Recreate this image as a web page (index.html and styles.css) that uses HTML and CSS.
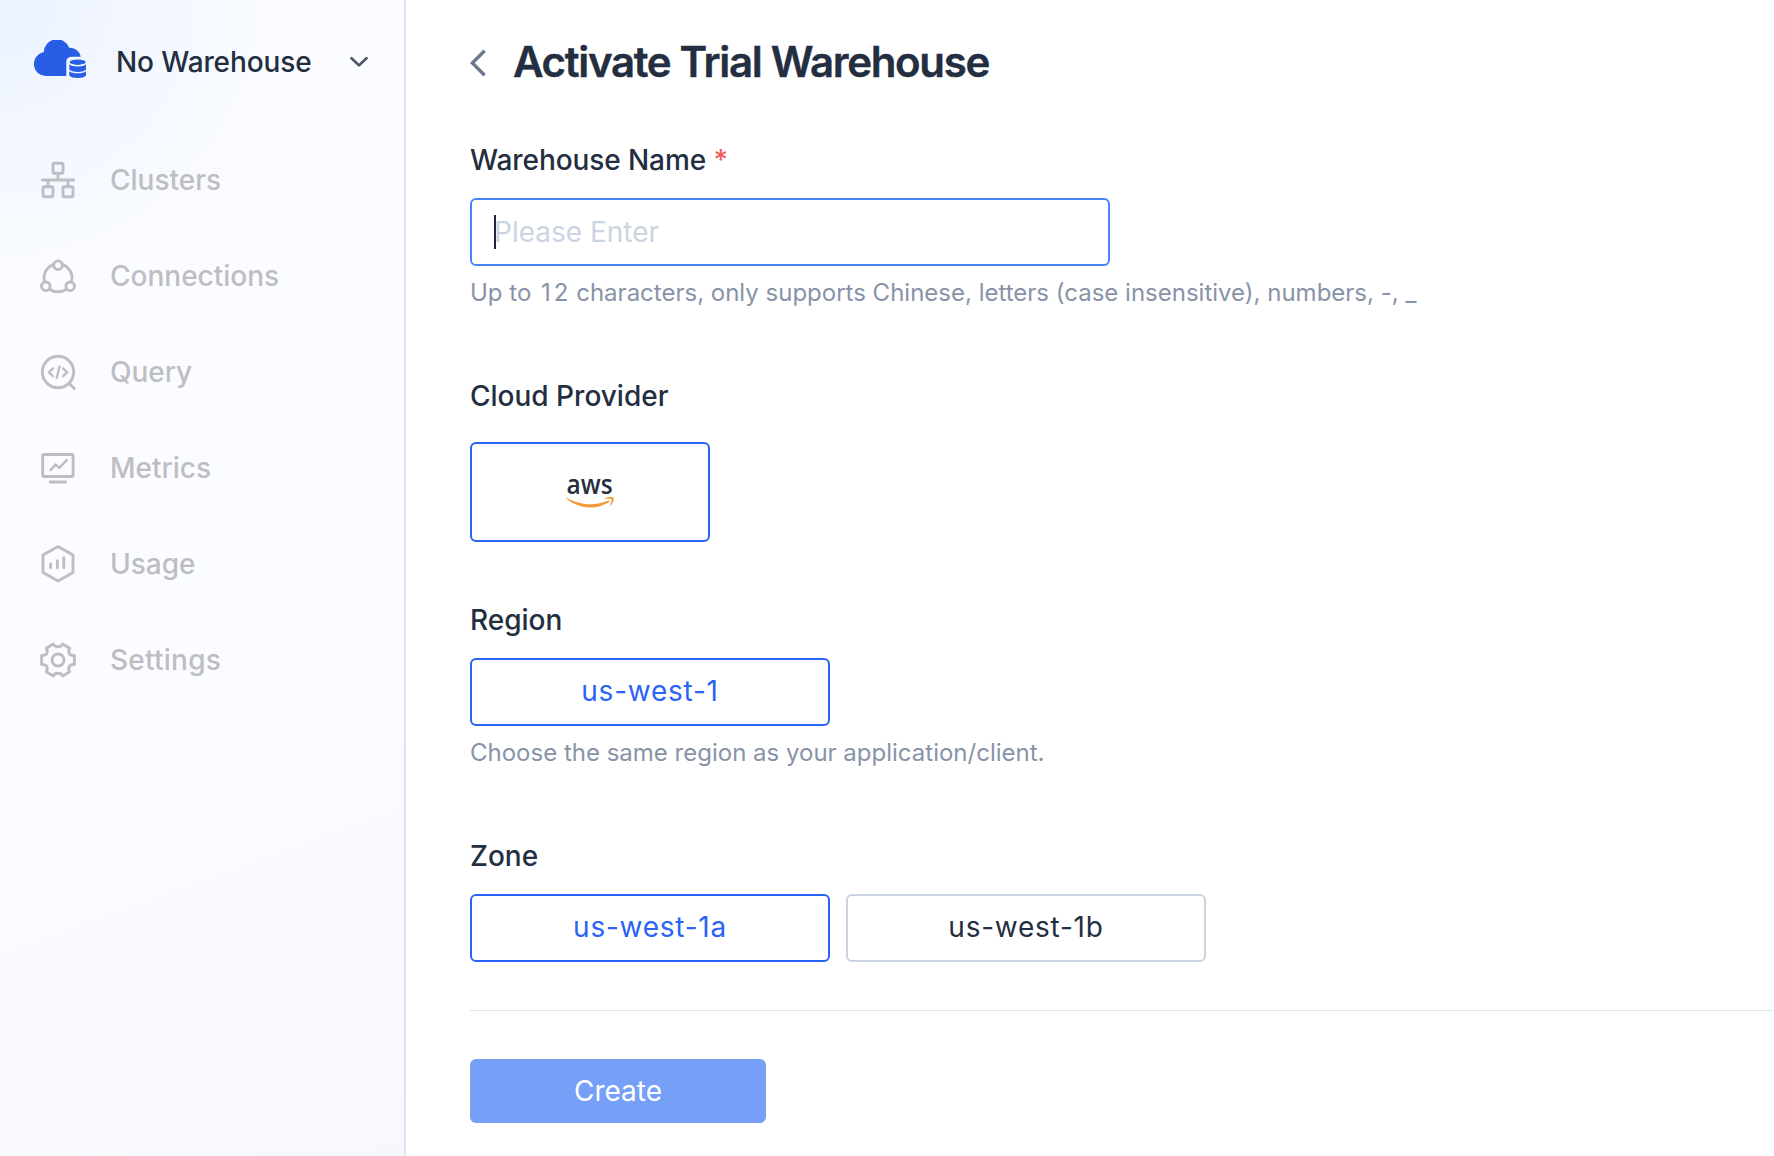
FILE: index.html
```
<!DOCTYPE html>
<html lang="en">
<head>
<meta charset="utf-8">
<title>Activate Trial Warehouse</title>
<link rel="stylesheet" href="styles.css">
</head>
<body>
<div class="app">
  <aside class="sidebar">
    <div class="switcher">
      <svg class="logo" viewBox="0 0 52 38" width="52" height="38" fill="#285ee6">
        <path d="M12 36A12 12 0 0 1 9.7 12.2A13.2 13.2 0 0 1 35.2 7.7A11.5 11.5 0 0 1 46.8 16.7H38.5Q32.3 16.7 32.3 21.5V36Z"/>
        <ellipse cx="43.7" cy="22.2" rx="8" ry="2.7"/>
        <path d="M35.3 24.2Q37.5 26.4 43.7 26.4Q49.8 26.4 52 24.2V29.5Q50 31.9 43.7 31.9Q37.3 31.9 35.3 29.5Z"/>
        <path d="M35.3 31.2Q38 33.2 43.7 33.2Q49.3 33.2 52 31.2V35.5Q50 38 43.7 38Q37.3 38 35.3 35.5Z"/>
      </svg>
      <span class="switcher-name">No Warehouse</span>
      <svg class="chevron" viewBox="0 0 20 12" width="20" height="12" fill="none" stroke="#4c566a" stroke-width="2.7" stroke-linecap="round" stroke-linejoin="round"><path d="M2.5 2.2L10 9.4L17.5 2.2"/></svg>
    </div>
    <nav class="nav">
      <a class="nav-item"><svg class="nav-icon" viewBox="0 0 36 40"><rect x="13" y="3.3" width="10" height="10" rx="1.2"/><path d="M18 13.5V20M2.2 20H33.8M8 20V26.5M28 20V26.5"/><rect x="3" y="26.7" width="10" height="10" rx="1.2"/><rect x="23" y="26.7" width="10" height="10" rx="1.2"/></svg>Clusters</a>
      <a class="nav-item"><svg class="nav-icon" viewBox="0 0 36 40"><circle cx="18" cy="21.8" r="14"/><circle class="node" cx="18" cy="9.2" r="4.3"/><circle class="node" cx="5.8" cy="30.3" r="4.3"/><circle class="node" cx="30.2" cy="30.3" r="4.3"/></svg>Connections</a>
      <a class="nav-item"><svg class="nav-icon" viewBox="0 0 36 40"><circle cx="18" cy="20" r="15.7"/><path d="M29.3 31.3L34.3 36.4"/><path class="thin" d="M13 16.4L8.8 20.3L13 24.2M19.6 14.6L16.7 25.8M23 16.4L27.2 20.3L23 24.2"/></svg>Query</a>
      <a class="nav-item"><svg class="nav-icon" viewBox="0 0 36 40"><rect x="2.7" y="6.5" width="30.4" height="22" rx="1.6"/><path d="M10.3 34H25.7"/><path class="thin" d="M10.5 22.2L15.5 16.6L19.3 19.8L26.8 12.2"/></svg>Metrics</a>
      <a class="nav-item"><svg class="nav-icon" viewBox="0 0 36 40"><path d="M18 2.6L33 11V28.6L18 37L3 28.6V11Z"/><path d="M10.6 20V23.8M17.4 17V23.8M23.8 13.8V23.8"/></svg>Usage</a>
      <a class="nav-item nav-item-settings"><svg class="nav-icon" viewBox="0 0 36 40"><path transform="translate(18 20)" d="M16.4-4.5Q12.5-4.2 11.3-6.5T11.7-11.7L4.7-15.9Q3.2-13.2 0-13.2T-4.7-15.9L-11.7-11.7Q-10-8.8-11.3-6.5T-16.4-4.5V4.5Q-12.5 4.2-11.3 6.5T-11.7 11.7L-4.7 15.9Q-3.2 13.2 0 13.2T4.7 15.9L11.7 11.7Q10 8.8 11.3 6.5T16.4 4.5Z"/><circle cx="18" cy="20" r="6"/></svg>Settings</a>
    </nav>
  </aside>
  <main class="main">
    <header class="page-head">
      <svg class="back" viewBox="0 0 16 28" width="16" height="28" fill="none" stroke="#6c788e" stroke-width="3.4"><path d="M14.6 1.8L2.4 14L14.6 26.2"/></svg>
      <h1 class="title">Activate Trial Warehouse</h1>
    </header>
    <section class="field field-name">
      <div class="label">Warehouse Name <span class="required">*</span></div>
      <div class="input"><span class="caret"></span><span class="placeholder">Please Enter</span></div>
      <div class="hint">Up to <span class="limit">12</span> characters, only supports Chinese, letters (case insensitive), numbers, -, _</div>
    </section>
    <section class="field field-provider">
      <div class="label">Cloud Provider</div>
      <div class="provider">
        <svg class="aws" viewBox="0 0 48 30" width="48" height="30"><text class="aws-word" x=".6" y="15" textLength="46" lengthAdjust="spacingAndGlyphs">aws</text><g transform="scale(.158)" fill="#f29b38"><path d="M273.5 143.7c-32.9 24.3-80.7 37.2-121.8 37.2c-57.6 0-109.5-21.3-148.7-56.7c-3.1-2.8-.3-6.6 3.4-4.4c42.4 24.6 94.7 39.5 148.8 39.5c36.5 0 76.6-7.6 113.5-23.2C274.2 133.6 278.9 139.7 273.5 143.7z"/><path d="M287.2 128.1c-4.2-5.4-27.8-2.6-38.5-1.3c-3.2.4-3.7-2.4-.8-4.5c18.8-13.2 49.7-9.4 53.3-5c3.6 4.5-1 35.4-18.6 50.2c-2.7 2.3-5.3 1.1-4.1-1.9C282.5 155.7 291.4 133.4 287.2 128.1z"/></g></svg>
      </div>
    </section>
    <section class="field">
      <div class="label">Region</div>
      <div class="options"><div class="option selected">us-west-1</div></div>
      <div class="hint">Choose the same region as your application/client.</div>
    </section>
    <section class="field">
      <div class="label">Zone</div>
      <div class="options"><div class="option selected">us-west-1a</div><div class="option">us-west-1b</div></div>
    </section>
    <footer class="actions"><button class="create">Create</button></footer>
  </main>
</div>
</body>
</html>
```
FILE: styles.css
```
* { box-sizing: border-box; }
body { margin: 0; background: #fff; color: #232e40; font: 400 28px/44px Inter, "Liberation Sans", sans-serif; }
.app { display: flex; height: 1156px; overflow: hidden; }
.sidebar {
  flex: none; width: 406px; border-right: 2px solid #dfe3f0;
  background:
    radial-gradient(circle at 0 0, rgba(236, 243, 255, 1) 0, rgba(239, 245, 255, .8) 120px, rgba(251, 252, 255, 0) 310px),
    linear-gradient(160deg, #fbfcff 55%, #f7f8fd 100%);
}
.switcher { display: flex; align-items: center; height: 124px; padding: 0 35px 0 34px; }
.logo { margin-top: -6px; }
.switcher-name { margin-left: 30px; font-weight: 500; letter-spacing: -.12px; }
.chevron { margin-left: auto; }
.nav { padding-top: 8px; }
.nav-item { display: flex; align-items: center; height: 96px; padding-left: 40px; gap: 34px; color: #bdbec3; font-weight: 500; }
.nav-item-settings { letter-spacing: .25px; }
.nav-icon { width: 36px; height: 40px; overflow: visible; fill: none; stroke: #bdbec3; stroke-width: 2.9; stroke-linecap: round; stroke-linejoin: round; }
.nav-icon .thin { stroke-width: 2.4; }
.nav-icon .node { fill: #fafcff; }
.main { flex: 1; padding: 34px 0 0 64px; min-width: 0; }
.page-head { display: flex; align-items: center; height: 56px; }
.back { margin-top: 2px; }
.title { margin: 0 0 0 27px; font-size: 42px; line-height: 56px; font-weight: 600; letter-spacing: -1.32px; -webkit-text-stroke: .4px #232e40; }
.label { font-weight: 500; }
.field-name .label { letter-spacing: -.08px; }
.page-head + .field { margin-top: 48px; }
.required { color: #f05a55; }
.input { display: flex; align-items: center; width: 640px; height: 68px; margin-top: 16px; padding: 0 22px; border: 2px solid #4c84f7; border-radius: 6px; }
.caret { width: 2px; height: 34px; margin-right: -2px; background: #1c2636; }
.placeholder { color: #cbd4e3; }
.hint { margin: 8px 0 -2px; font-size: 24px; line-height: 38px; color: #8893a8; white-space: nowrap; }
.limit { margin: 0 -2px 0 3px; letter-spacing: 3px; }
.field { margin-top: 64px; }
.provider { display: flex; align-items: center; justify-content: center; width: 240px; height: 100px; margin-top: 24px; border: 2px solid #2a63f6; border-radius: 6px; }
.aws { margin-top: 4px; overflow: visible; }
.aws-word { font: 600 27px/1 "Open Sans", "Noto Sans", sans-serif; fill: #252f3e; }
.field-provider + .field { margin-top: 56px; }
.options { display: flex; gap: 16px; margin-top: 16px; }
.option { display: flex; align-items: center; justify-content: center; width: 360px; height: 68px; padding-bottom: 2px; border: 2px solid #cbd3e2; border-radius: 6px; letter-spacing: .75px; }
.option.selected { border-color: #2a63f6; color: #2a63f6; }
.actions { margin-top: 48px; padding-top: 48px; border-top: 1px solid #dfe3ee; }
.create { display: block; width: 296px; height: 64px; padding: 0; border: 0; border-radius: 6px; background: #769ff8; color: #fff; font: inherit; }
```
